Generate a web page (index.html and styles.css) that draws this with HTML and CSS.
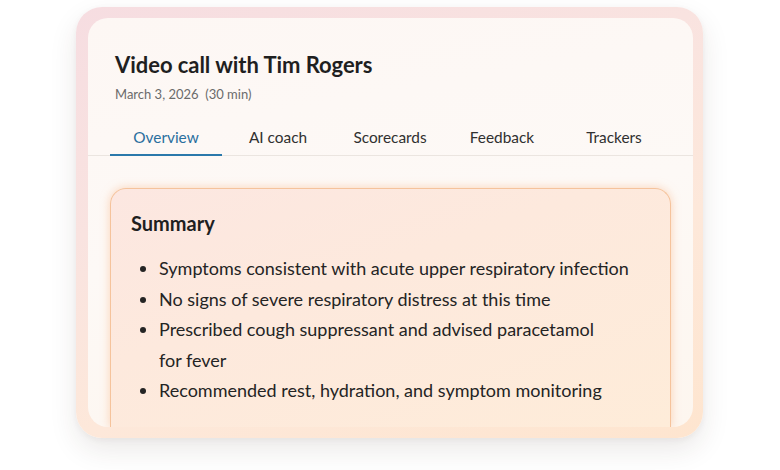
FILE: index.html
```html
<!DOCTYPE html>
<html lang="en">
<head>
<meta charset="utf-8">
<title>Video call with Tim Rogers</title>
<link rel="stylesheet" href="styles.css">
</head>
<body>
<div class="stage">
  <div class="frame">
    <div class="card">
      <header class="head">
        <h1 class="title">Video call with Tim Rogers</h1>
        <p class="meta">March 3, 2026&nbsp; (30 min)</p>
      </header>
      <nav class="tabs">
        <span class="tab active">Overview</span>
        <span class="tab">AI coach</span>
        <span class="tab">Scorecards</span>
        <span class="tab">Feedback</span>
        <span class="tab">Trackers</span>
      </nav>
      <section class="summary">
        <h2 class="summary-title">Summary</h2>
        <ul class="points">
          <li>Symptoms consistent with acute upper respiratory infection</li>
          <li>No signs of severe respiratory distress at this time</li>
          <li>Prescribed cough suppressant and advised paracetamol<br>for fever</li>
          <li>Recommended rest, hydration, and symptom monitoring</li>
        </ul>
      </section>
    </div>
  </div>
</div>
</body>
</html>
```

FILE: styles.css
```css
* { box-sizing: border-box; }
html, body { margin: 0; padding: 0; background: #ffffff; }
body {
  width: 780px;
  height: 470px;
  overflow: hidden;
  font-family: Lato, "Open Sans", sans-serif;
  color: #222222;
}
.stage {
  padding: 7px 0 0 76px;
}
.frame {
  width: 627px;
  height: 431px;
  border-radius: 26px;
  padding: 11px 10px 11px 12px;
  background: linear-gradient(160deg, #f6dde1 0%, #f9e3e0 35%, #fde8da 65%, #fee5cf 100%);
  box-shadow: 0 12px 28px rgba(60, 40, 30, 0.10), 0 2px 6px rgba(60, 40, 30, 0.05);
}
.card {
  height: 100%;
  border-radius: 20px;
  overflow: hidden;
  background: linear-gradient(170deg, #fdf7f4 0%, #fdf9f6 50%, #fdf6ef 100%);
  display: flex;
  flex-direction: column;
}
.head {
  padding: 33px 0 0 27px;
}
.title {
  margin: 0;
  font-size: 22px;
  line-height: 28px;
  font-weight: 700;
  color: #1f1f1f;
  letter-spacing: -0.05px;
}
.meta {
  margin: 7px 0 0;
  font-size: 13px;
  line-height: 16px;
  color: #6b6b6b;
}
.tabs {
  margin-top: 17px;
  padding-left: 22px;
  display: flex;
  border-bottom: 1px solid #ebe5e0;
}
.tab {
  width: 112px;
  text-align: center;
  font-size: 15.4px;
  line-height: 20px;
  padding: 8px 0 7px;
  color: #303030;
  border-bottom: 2px solid transparent;
  margin-bottom: -1px;
}
.tab.active {
  color: #2a6f9e;
  border-bottom-color: #2a79ab;
}
.summary {
  margin: 32px 0 0 22px;
  width: 561px;
  flex: 1;
  border: 1.5px solid #f5c39c;
  border-bottom: none;
  border-radius: 16px 16px 0 0;
  background: linear-gradient(160deg, #fce7e1 0%, #fde9dd 40%, #feecd9 100%);
  box-shadow: 0 0 10px rgba(250, 185, 140, 0.6);
  padding: 21px 20px 0 20px;
}
.summary-title {
  margin: 0;
  font-size: 20px;
  line-height: 26px;
  font-weight: 700;
  color: #1f1f1f;
}
.points {
  margin: 17px 0 0;
  padding-left: 28px;
  font-size: 18px;
  line-height: 30.5px;
  color: #242424;
}
```
